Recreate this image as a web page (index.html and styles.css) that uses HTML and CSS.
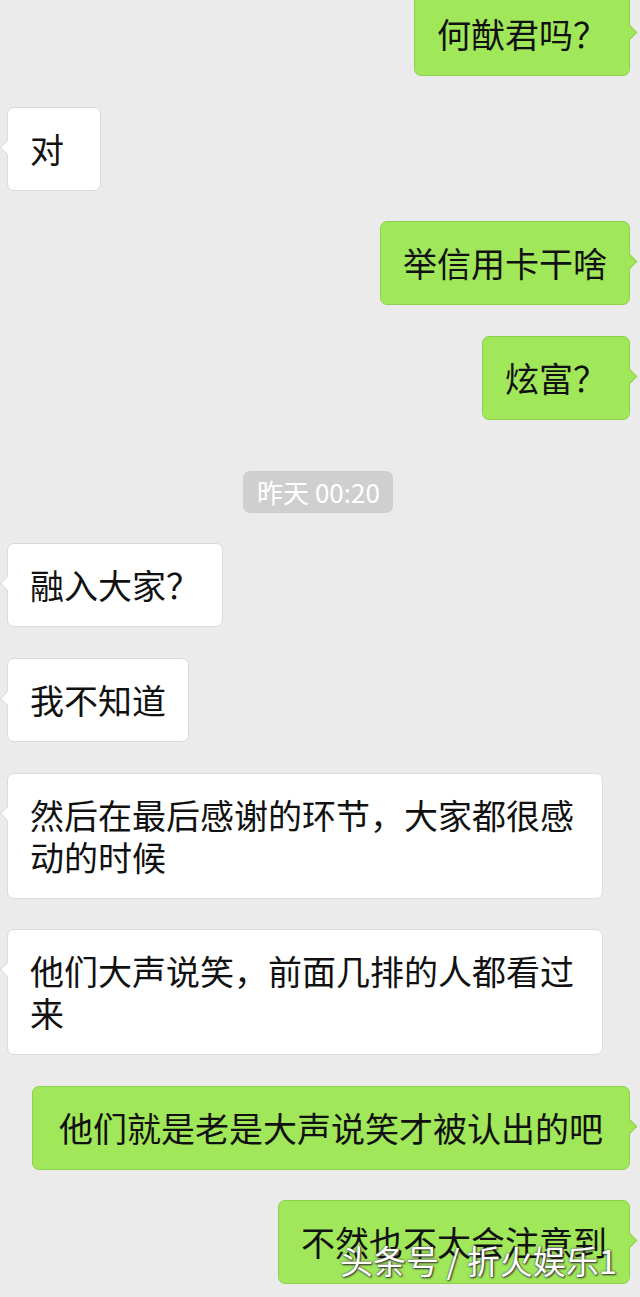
FILE: index.html
```html
<!DOCTYPE html>
<html lang="zh">
<head>
<meta charset="utf-8">
<link rel="stylesheet" href="styles.css">
</head>
<body>
<div class="chat">
  <div class="row right"><div class="bubble green">何猷君吗？</div></div>
  <div class="row left"><div class="bubble white">对</div></div>
  <div class="row right"><div class="bubble green">举信用卡干啥</div></div>
  <div class="row right"><div class="bubble green">炫富？</div></div>
  <div class="row center"><div class="time">昨天 00:20</div></div>
  <div class="row left"><div class="bubble white">融入大家？</div></div>
  <div class="row left"><div class="bubble white">我不知道</div></div>
  <div class="row left"><div class="bubble white">然后在最后感谢的环节，大家都很感动的时候</div></div>
  <div class="row left"><div class="bubble white">他们大声说笑，前面几排的人都看过来</div></div>
  <div class="row right"><div class="bubble green wide">他们就是老是大声说笑才被认出的吧</div></div>
  <div class="row right"><div class="bubble green">不然也不太会注意到</div></div>
</div>
<div class="watermark">头条号 / 折火娱乐1</div>
</body>
</html>
```

FILE: styles.css
```css
html, body {
  margin: 0;
  padding: 0;
  background: #ebebeb;
  height: 1297px;
  overflow: hidden;
}
body {
  position: relative;
  font-family: "Noto Sans CJK SC", "Noto Sans", sans-serif;
  color: #111;
}
.chat {
  display: flex;
  flex-direction: column;
  gap: 30.6px;
  margin-top: -8px;
}
.row {
  display: flex;
}
.row.right {
  justify-content: flex-end;
  padding-right: 10px;
}
.row.left {
  justify-content: flex-start;
  padding-left: 7px;
}
.row.center {
  justify-content: center;
  margin-top: 20.4px;
  padding-left: 0;
}
.bubble {
  position: relative;
  box-sizing: border-box;
  min-width: 94px;
  max-width: 598px;
  padding: 20px 22px;
  font-size: 34px;
  line-height: 42px;
  border-radius: 7px;
  border: 1px solid transparent;
}
.bubble.white {
  background: #ffffff;
  border-color: #dadada;
  max-width: 596px;
}
.bubble.green {
  background: #a0e75a;
  border-color: #8fd04f;
}
.bubble.wide {
  padding-left: 26px;
  padding-right: 26px;
}
.bubble::before {
  content: "";
  position: absolute;
  top: 34px;
  width: 11px;
  height: 11px;
  transform: rotate(45deg);
  box-sizing: border-box;
}
.bubble.white::before {
  left: -6px;
  background: #ffffff;
  border-left: 1px solid #dadada;
  border-bottom: 1px solid #dadada;
}
.bubble.green::before {
  right: -6px;
  background: #a0e75a;
  border-top: 1px solid #8fd04f;
  border-right: 1px solid #8fd04f;
}
.time {
  background: #cfcfcf;
  color: #ffffff;
  font-size: 26px;
  line-height: 42px;
  height: 42px;
  padding: 0 13px 0 14px;
  margin-right: 4px;
  border-radius: 7px;
}
.watermark {
  position: absolute;
  left: 340px;
  top: 1236px;
  font-size: 33px;
  line-height: 48px;
  color: #ffffff;
  text-shadow: 0 0 2px #333, 1px 1px 2px #333;
}
```
